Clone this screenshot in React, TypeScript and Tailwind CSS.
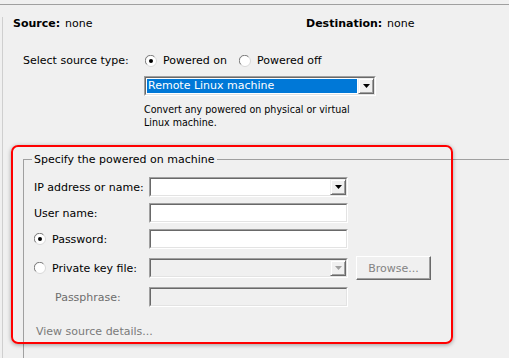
import { ReactNode } from 'react'

function Radio({ checked }: { checked?: boolean }) {
  return (
    <svg width="12" height="12" viewBox="0 0 12 12" className="shrink-0">
      <circle cx="6" cy="6" r="5.5" fill="#fff" stroke="#d8d8d8" />
      <path d="M1.8 9.4 A5 5 0 0 1 9.4 1.8" fill="none" stroke="#7a7a7a" />
      {checked && <circle cx="6" cy="6" r="2" fill="#000" />}
    </svg>
  )
}

function Sunken({ className = '', inner = 'bg-white', children }: { className?: string; inner?: string; children?: ReactNode }) {
  return (
    <div className={`border border-t-[#a0a0a0] border-l-[#a0a0a0] border-r-white border-b-white ${className}`}>
      <div className={`h-full flex border border-t-[#696969] border-l-[#696969] border-r-[#e3e3e3] border-b-[#e3e3e3] ${inner}`}>
        {children}
      </div>
    </div>
  )
}

function ArrowButton({ disabled }: { disabled?: boolean }) {
  return (
    <div className="w-[16px] h-full flex items-center justify-center bg-[#f0f0f0] border border-t-[#f0f0f0] border-l-[#f0f0f0] border-r-[#696969] border-b-[#696969] shadow-[inset_1px_1px_0_#fff,inset_-1px_-1px_0_#a0a0a0]">
      <svg width="7" height="4" viewBox="0 0 7 4">
        <path d="M0 0h7L3.5 4z" fill={disabled ? '#a0a0a0' : '#000'} />
      </svg>
    </div>
  )
}

export default function App() {
  return (
    <div className="w-[509px] h-[358px] overflow-hidden relative bg-[#f0f0f0] font-['DejaVu_Sans',Verdana,sans-serif] text-[11px] leading-[13px] text-black pt-[4px]">
      <div className="h-full border-t border-[#a0a0a0]">
        <div className="ml-[2px] h-full border-l border-[#cfcfcf]">
          {/* source / destination */}
          <div className="mt-[12px] pl-[10px] flex">
            <div className="w-[293px] flex">
              <span className="w-[52px] font-bold">Source:</span>
              <span>none</span>
            </div>
            <div className="flex">
              <span className="w-[81px] font-bold">Destination:</span>
              <span>none</span>
            </div>
          </div>

          {/* source type */}
          <div className="mt-[24px] pl-[20px] flex items-center h-[13px]">
            <span className="w-[122px]">Select source type:</span>
            <div className="w-[94px] flex items-center gap-[6px]">
              <Radio checked />
              <span>Powered on</span>
            </div>
            <div className="flex items-center gap-[6px]">
              <Radio />
              <span>Powered off</span>
            </div>
          </div>

          <Sunken className="mt-[9px] ml-[141px] w-[232px] h-[20px]">
            <div className="flex-1 p-[1px]">
              <div className="h-full bg-[#0078d7] text-white pl-[1px] leading-[14px]">Remote Linux machine</div>
            </div>
            <ArrowButton />
          </Sunken>

          <p className="mt-[7px] ml-[141px] font-['DejaVu_Sans_Condensed','DejaVu_Sans',sans-serif] text-[10.6px]">
            Convert any powered on physical or virtual
            <br />
            Linux machine.
          </p>

          {/* group box */}
          <fieldset className="mt-[24px] ml-[20px] border-t border-l border-[#a0a0a0] pb-[40px]">
            <legend className="ml-[8px] px-[2px]">Specify the powered on machine</legend>

            <div className="mt-[11px] pl-[10px] flex items-center h-[20px]">
              <span className="w-[115px]">IP address or name:</span>
              <Sunken className="w-[199px] h-[20px]">
                <div className="flex-1" />
                <ArrowButton />
              </Sunken>
            </div>

            <div className="mt-[6px] pl-[10px] flex items-center h-[20px]">
              <span className="w-[115px]">User name:</span>
              <Sunken className="w-[199px] h-[20px]" />
            </div>

            <div className="mt-[6px] pl-[10px] flex items-center h-[20px]">
              <div className="w-[115px] flex items-center gap-[6px]">
                <Radio checked />
                <span>Password:</span>
              </div>
              <Sunken className="w-[199px] h-[20px]" />
            </div>

            <div className="mt-[7px] pl-[10px] flex items-center h-[24px]">
              <div className="w-[115px] flex items-center gap-[6px]">
                <Radio />
                <span>Private key file:</span>
              </div>
              <Sunken className="w-[199px] h-[20px]" inner="bg-[#f0f0f0]">
                <div className="flex-1" />
                <ArrowButton disabled />
              </Sunken>
              <button className="ml-[8px] w-[75px] h-[24px] bg-[#f0f0f0] text-[#838383] border border-t-white border-l-white border-r-[#696969] border-b-[#696969] shadow-[inset_-1px_-1px_0_#a0a0a0]">
                Browse...
              </button>
            </div>

            <div className="mt-[7px] pl-[10px] flex items-center h-[20px]">
              <span className="w-[115px] pl-[21px] text-[#6d6d6d]">Passphrase:</span>
              <Sunken className="w-[199px] h-[20px]" inner="bg-[#f0f0f0]" />
            </div>

            <div className="mt-[18px] pl-[12px] text-[#7a7a7a]">View source details...</div>
          </fieldset>
        </div>
      </div>

      {/* highlight annotation */}
      <div className="absolute left-[11px] top-[145px] w-[442px] h-[199px] rounded-[7px] border-2 border-[#ff0000] shadow-[0_1px_4px_rgba(0,0,0,0.35)] pointer-events-none" />
    </div>
  )
}
